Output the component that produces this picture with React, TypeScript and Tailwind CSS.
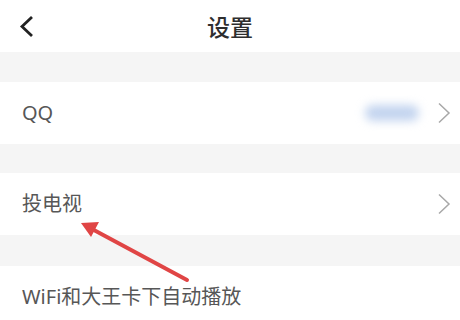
const ROW_FONT = "font-['Noto_Sans','Noto_Sans_CJK_SC',sans-serif]";

function Chevron() {
  return (
    <svg width="14" height="22" viewBox="0 0 14 22">
      <path d="M2 1.5 L12 11 L2 20.5" fill="none" stroke="#a8a8a8" strokeWidth="1.5" />
    </svg>
  );
}

function Row({ label, arrow = true, children }: { label: string; arrow?: boolean; children?: React.ReactNode }) {
  return (
    <div className="h-[62px] bg-white flex items-center justify-between pl-[22px] pr-[9px]">
      <span className={`text-[20px] text-[#575757] ${ROW_FONT}`}>{label}</span>
      <div className="flex items-center gap-[18px]">
        {children}
        {arrow && <Chevron />}
      </div>
    </div>
  );
}

export default function App() {
  return (
    <div className="relative w-[460px] h-[320px] overflow-hidden bg-[#f5f5f5]">
      {/* Header */}
      <div className="h-[52px] bg-white flex items-center relative">
        <svg className="absolute left-[19px] top-[15px]" width="16" height="23" viewBox="0 0 16 23">
          <path d="M13 2 L3 11.5 L13 21" fill="none" stroke="#222" strokeWidth="2.8" strokeLinejoin="miter" />
        </svg>
        <h1 className={`flex-1 text-center text-[23px] font-medium text-[#2e2e2e] pt-[2px] ${ROW_FONT}`}>设置</h1>
      </div>

      <div className="h-[30px]" />
      <Row label="QQ">
        <div className="w-[54px] h-[16px] rounded-full bg-[#c3d4ef] blur-[5px]" />
      </Row>
      <div className="h-[29px]" />
      <Row label="投电视" />
      <div className="h-[31px]" />
      <Row label="WiFi和大王卡下自动播放" arrow={false} />

      {/* Annotation arrow */}
      <svg className="absolute left-0 top-0 pointer-events-none" width="460" height="320" viewBox="0 0 460 320">
        <line x1="187" y1="280" x2="92" y2="229" stroke="#e04545" strokeWidth="4" strokeLinecap="round" />
        <polygon points="81,223 99,222 91,237" fill="#e04545" />
      </svg>
    </div>
  );
}
